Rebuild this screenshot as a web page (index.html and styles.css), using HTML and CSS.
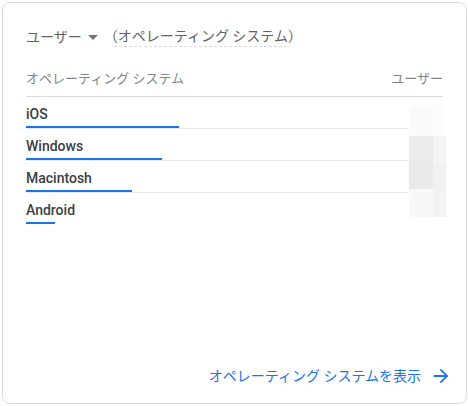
FILE: index.html
```html
<!DOCTYPE html>
<html lang="ja">
  <head>
    <meta charset="UTF-8" />
    <meta name="viewport" content="width=device-width, initial-scale=1.0" />
    <title>ユーザー（オペレーティング システム）</title>
    <link rel="stylesheet" href="styles.css">
  </head>
  <body>
    <div class="card">
      <div class="card-title">
        <span class="metric">ユーザー</span>
        <span class="caret"></span>
        <span class="dimension">（オペレーティング システム）</span>
      </div>

      <div class="table-head">
        <span>オペレーティング システム</span>
        <span>ユーザー</span>
      </div>

      <div class="table-body">
        <div class="rows">
          <div class="row">
            <div class="label">iOS</div>
            <div class="bar" style="width: 153px"></div>
          </div>
          <div class="row">
            <div class="label">Windows</div>
            <div class="bar" style="width: 136px"></div>
          </div>
          <div class="row">
            <div class="label">Macintosh</div>
            <div class="bar" style="width: 106px"></div>
          </div>
          <div class="row last">
            <div class="label">Android</div>
            <div class="bar" style="width: 29px"></div>
          </div>
        </div>
        <!-- values are pixelated out -->
        <div class="values">
          <div class="px c1"></div><div class="px c2"></div>
          <div class="px c3"></div><div class="px c4"></div>
          <div class="px c5"></div><div class="px c6"></div>
          <div class="px c7"></div><div class="px c8"></div>
        </div>
      </div>

      <div class="card-footer">
        <a href="#" class="more">オペレーティング システムを表示
          <svg viewBox="0 0 24 24" width="22" height="22"><path d="M12 4l-1.41 1.41L16.17 11H4v2h12.17l-5.58 5.59L12 20l8-8z" fill="#1a73e8"/></svg>
        </a>
      </div>
    </div>
  </body>
</html>
```

FILE: styles.css
```css
body {
  margin: 0;
  font-family: Roboto, "Noto Sans CJK JP", sans-serif;
  background-color: #fff;
  color: #3c4043;
}

.card {
  box-sizing: border-box;
  width: 465px;
  height: 402px;
  margin: 2px 0 0 2px;
  border: 1px solid #dadce0;
  border-radius: 8px;
  padding: 23px 23px 0;
  display: flex;
  flex-direction: column;
}

.card-title {
  display: flex;
  align-items: center;
  font-size: 14px;
  line-height: 20px;
  color: #5f6368;
}

.caret {
  width: 0;
  height: 0;
  margin: 1px 6px 0 6px;
  border-left: 5px solid transparent;
  border-right: 5px solid transparent;
  border-top: 5px solid #757575;
}

/* dashed underline only under the dimension name */
.dimension {
  background: repeating-linear-gradient(to right, #dadce0 0 3px, transparent 3px 5px) 10px 20px / 176px 1px no-repeat;
  padding-bottom: 1px;
}

.table-head {
  display: flex;
  justify-content: space-between;
  margin-top: 22px;
  padding-bottom: 7px;
  border-bottom: 1px solid #dadce0;
  font-size: 13px;
  line-height: 20px;
  color: #80868b;
}

.table-body {
  display: flex;
}

.rows {
  flex: 1;
}

.row {
  padding-top: 7px;
  border-bottom: 1px solid #e8eaed;
}

.row.last {
  border-bottom: none;
}

.label {
  font-size: 14px;
  line-height: 20px;
  font-weight: 500;
  color: #3c4043;
}

.bar {
  height: 2px;
  margin-top: 2px;
  background-color: #1a73e8;
}

.values {
  display: grid;
  grid-template-columns: 24px 13px;
  grid-template-rows: 31px 27px 26px 28px;
  margin: 8px -3px 0 0;
  align-self: flex-start;
}

.c1 { background-color: #fafafa; }
.c2 { background-color: #fcfcfc; }
.c3 { background-color: #ebebeb; }
.c4 { background-color: #f4f4f4; }
.c5 { background-color: #eaeaea; }
.c6 { background-color: #f1f1f1; }
.c7 { background-color: #f8f8f8; }
.c8 { background-color: #f3f3f3; }

.card-footer {
  margin-top: auto;
  margin-right: -9px;
  padding-bottom: 16px;
  display: flex;
  justify-content: flex-end;
}

.more {
  display: flex;
  align-items: center;
  gap: 9px;
  font-size: 14px;
  line-height: 22px;
  color: #1a73e8;
  text-decoration: none;
}
```
